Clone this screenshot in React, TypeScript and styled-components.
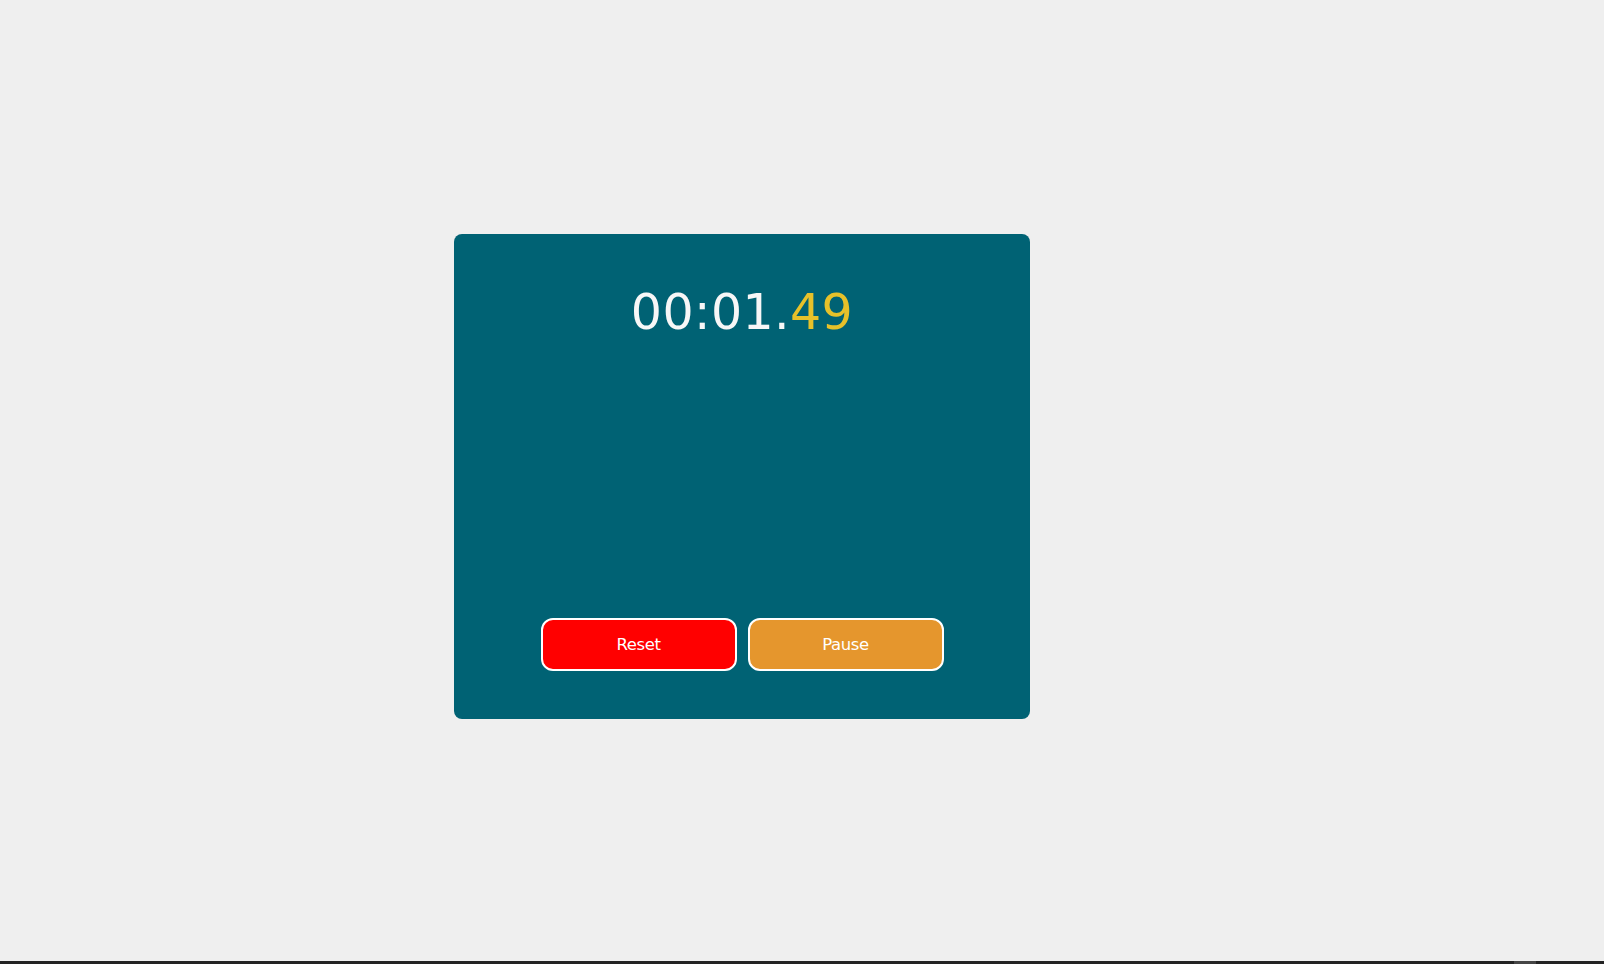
import React from "react";
import styled, { createGlobalStyle } from "styled-components";

const GlobalStyle = createGlobalStyle`
  html, body {
    margin: 0;
    padding: 0;
    background: #efefef;
    font-family: "DejaVu Sans", Verdana, sans-serif;
  }
  * { box-sizing: border-box; }
`;

const Page = styled.div`
  display: flex;
  flex-direction: column;
  height: 964px;
  overflow: hidden;
`;

const Main = styled.main`
  flex: 1;
  padding: 234px 0 0 454px;
`;

const Card = styled.section`
  width: 576px;
  height: 485px;
  background: #006274;
  border-radius: 8px;
  display: flex;
  flex-direction: column;
  justify-content: space-between;
  align-items: center;
  padding: 50px 0 48px;
`;

const Timer = styled.div`
  font-size: 49px;
  line-height: 57px;
  color: #f7f7f7;
  letter-spacing: 0.4px;
`;

const Hundredths = styled.span`
  color: #e6c12a;
`;

const Controls = styled.div`
  display: flex;
  gap: 11px;
`;

const Button = styled.button<{ $bg: string }>`
  width: 196px;
  height: 53px;
  border: 2px solid #ffffff;
  border-radius: 12px;
  background: ${(p) => p.$bg};
  color: #ffffff;
  font-family: "DejaVu Sans", Verdana, sans-serif;
  font-size: 16.5px;
  letter-spacing: -0.4px;
  cursor: pointer;
  padding: 0;
`;

const BottomBar = styled.div`
  height: 3px;
  background: #232323;
  display: flex;
  justify-content: flex-end;
  padding-right: 68px;
`;

const BarThumb = styled.div`
  width: 22px;
  background: #454545;
`;

export default function App() {
  return (
    <>
      <GlobalStyle />
      <Page>
        <Main>
          <Card>
            <Timer>
              00:01.<Hundredths>49</Hundredths>
            </Timer>
            <Controls>
              <Button $bg="#ff0000">Reset</Button>
              <Button $bg="#e5962d">Pause</Button>
            </Controls>
          </Card>
        </Main>
        <BottomBar>
          <BarThumb />
        </BottomBar>
      </Page>
    </>
  );
}
